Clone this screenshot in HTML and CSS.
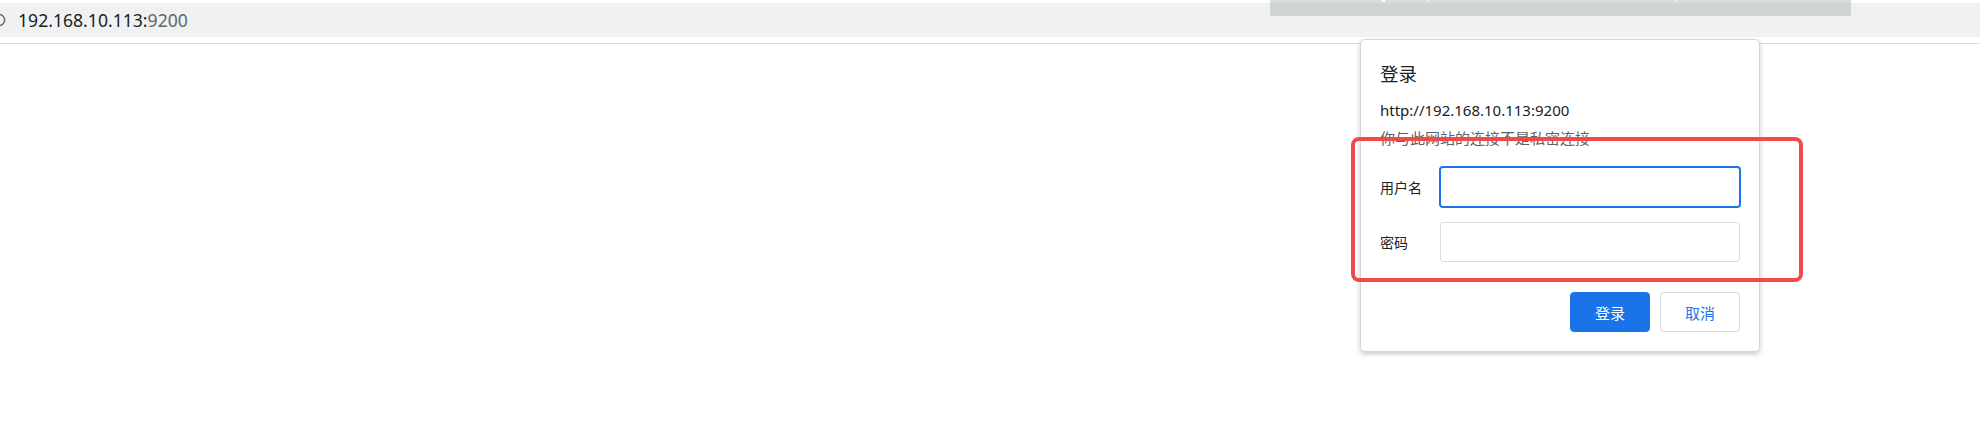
FILE: index.html
```html
<!DOCTYPE html>
<html lang="zh-CN">
  <head>
    <meta charset="UTF-8" />
    <meta name="viewport" content="width=device-width, initial-scale=1.0" />
    <title>192.168.10.113:9200</title>
    <link rel="stylesheet" href="styles.css">
  </head>
  <body>
    <div class="toolbar">
      <div class="omnibox">
        <svg class="info-icon" width="6" height="14" viewBox="0 0 6 14" aria-hidden="true">
          <circle cx="-1" cy="7" r="5.6" fill="none" stroke="#6b6e71" stroke-width="1.5" />
        </svg>
        <span class="host">192.168.10.113:</span><span class="port">9200</span>
      </div>
    </div>

    <!-- greyed bar left from the window above -->
    <div class="overlay-strip">
      <span class="tick tick-1"></span>
      <span class="tick tick-2"></span>
      <span class="tick tick-3"></span>
    </div>

    <div class="auth-dialog" role="dialog" aria-labelledby="auth-title">
      <h2 id="auth-title" class="auth-title">登录</h2>
      <p class="auth-origin">http://192.168.10.113:9200</p>
      <p class="auth-warning">你与此网站的连接不是私密连接</p>

      <form class="auth-form" onsubmit="return false">
        <div class="form-row">
          <label for="username">用户名</label>
          <input id="username" class="field field-focus" type="text" />
        </div>
        <div class="form-row">
          <label for="password">密码</label>
          <input id="password" class="field" type="password" />
        </div>
        <div class="form-actions">
          <button class="btn btn-primary" type="submit">登录</button>
          <button class="btn btn-secondary" type="button">取消</button>
        </div>
      </form>
    </div>

    <div class="highlight-box" aria-hidden="true"></div>
  </body>
</html>
```

FILE: styles.css
```css
body {
  margin: 0;
  background: #fff;
  font-family: "Noto Sans", "Noto Sans CJK SC", sans-serif;
  color: #202124;
}

.toolbar {
  padding-top: 3px;
  height: 40px;
  border-bottom: 1px solid #d9dbdc;
}

.omnibox {
  display: flex;
  align-items: center;
  height: 34px;
  background: #eff1f2;
  font-size: 17.6px;
}

.info-icon {
  margin-right: 12px;
}

.host {
  color: #202124;
}

.port {
  color: #62666a;
}

.overlay-strip {
  position: absolute;
  left: 1270px;
  top: 0;
  width: 581px;
  height: 13px;
  background: #d0d4d5;
  border-top: 3px solid #dcdcdc;
}

.tick {
  position: absolute;
  top: -3px;
  width: 3px;
  height: 2px;
  background: #fff;
}

.tick-1 { left: 112px; }
.tick-2 { left: 157px; width: 1px; }
.tick-3 { left: 406px; width: 1px; }

.auth-dialog {
  position: absolute;
  left: 1360px;
  top: 39px;
  width: 360px;
  padding: 22px 19px 19px;
  background: #fff;
  border: 1px solid #d6d6d6;
  border-radius: 5px;
  box-shadow: 0 2px 5px rgba(0, 0, 0, 0.22);
}

.auth-title {
  margin: 0 0 12px;
  font-size: 18.5px;
  line-height: 24px;
  font-weight: normal;
}

.auth-origin,
.auth-warning {
  margin: 0;
  font-size: 15px;
  line-height: 25px;
}

.auth-warning {
  margin-top: 3px;
  color: #5f6368;
}

.auth-form {
  margin-top: 16px;
}

.form-row {
  display: flex;
  align-items: center;
  margin-bottom: 15px;
}

.form-row label {
  width: 60px;
  font-size: 14px;
}

.field {
  flex: 1;
  box-sizing: border-box;
  height: 40px;
  margin: 0;
  border: 1px solid #dadce0;
  border-radius: 3px;
  outline: none;
  background: #fff;
}

.field-focus {
  border-color: #1a73e8;
  box-shadow: 0 0 0 1px #1a73e8;
}

.form-actions {
  display: flex;
  justify-content: flex-end;
  gap: 10px;
  margin-top: 30px;
}

.btn {
  width: 80px;
  height: 40px;
  border-radius: 4px;
  font-family: inherit;
  font-size: 15px;
  cursor: pointer;
}

.btn-primary {
  background: #1a73e8;
  border: 1px solid #1a73e8;
  color: #fff;
}

.btn-secondary {
  background: #fff;
  border: 1px solid #dadce0;
  color: #1a73e8;
}

.highlight-box {
  position: absolute;
  left: 1351px;
  top: 137px;
  width: 444px;
  height: 137px;
  border: 4px solid #ef4b4b;
  border-radius: 8px;
}
```
